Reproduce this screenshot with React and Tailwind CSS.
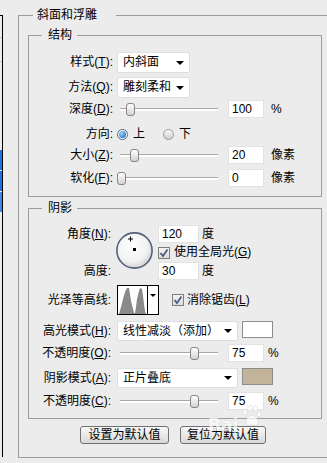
import React from "react";

function Key({ c }) {
    return <span className="underline underline-offset-[1px]">{c}</span>;
}

function Select({ value, w, h }) {
    return (
        <div className={`flex items-center justify-between bg-white border border-[#dedede] rounded-[2px] pl-[5px] pr-[5px] ${w} ${h}`}>
            <span>{value}</span>
            <span className="w-0 h-0 border-l-[4px] border-r-[4px] border-t-[4px] border-l-transparent border-r-transparent border-t-black" />
        </div>
    );
}

function Field({ value, w = "w-[36px]" }) {
    return (
        <div className={`h-[18px] bg-white border border-[#e2e2e2] pl-[3px] flex items-center leading-none ${w}`}>
            {value}
        </div>
    );
}

function Slider({ at }) {
    return (
        <div className="relative flex items-center w-[104px] h-[14px] px-[3px]">
            <div className="w-full h-[3px] border-t border-[#a9a9a9] bg-white" />
            <div
                className="absolute top-[1px] w-[9px] h-[13px] rounded-[3px] border border-[#858585] bg-gradient-to-b from-white to-[#d2d2d2]"
                style={{ left: at }}
            />
        </div>
    );
}

function Check({ className = "" }) {
    return (
        <div className={`w-[12px] h-[12px] border border-[#7d7d7d] bg-gradient-to-b from-[#f4f4f4] to-[#dcdcdc] flex items-center justify-center ${className}`}>
            <svg width="10" height="10" viewBox="0 0 10 10">
                <path d="M1.5 5 L4 8 L8.5 1.5" fill="none" stroke="#4b5b86" strokeWidth="1.8" />
            </svg>
        </div>
    );
}

function Radio({ on }) {
    return (
        <div className={`w-[11px] h-[11px] rounded-full border flex items-center justify-center ${on ? "border-[#4d6487] bg-white" : "border-[#9a9a9a] bg-gradient-to-b from-[#fafafa] to-[#cfcfcf]"}`}>
            {on && <div className="w-[7px] h-[7px] rounded-full bg-[radial-gradient(circle_at_35%_35%,#9ad6ff,#0b5aa6)]" />}
        </div>
    );
}

function Row({ label, lw = "w-[84px]", gap = "gap-[4px]", className = "", children }) {
    return (
        <div className={`flex items-center ${gap} ${className}`}>
            <div className={`text-right shrink-0 ${lw}`}>{label}</div>
            {children}
        </div>
    );
}

function Dial() {
    return (
        <svg width="37" height="37" viewBox="0 0 37 37">
            <defs>
                <radialGradient id="dg" cx="42%" cy="38%" r="70%">
                    <stop offset="0" stopColor="#ffffff" />
                    <stop offset="0.65" stopColor="#f1f1f1" />
                    <stop offset="1" stopColor="#c4c4c4" />
                </radialGradient>
            </defs>
            <circle cx="18.5" cy="18.5" r="17.6" fill="url(#dg)" stroke="#52607d" strokeWidth="1.6" />
            <path d="M14.5 4.5v5M12 7h5" stroke="#000" strokeWidth="1" />
            <rect x="17" y="16" width="3" height="3" fill="#000" />
        </svg>
    );
}

function Contour() {
    return (
        <div className="flex w-[42px] h-[30px] border border-black bg-white">
            <svg width="29" height="28" viewBox="0 0 29 28">
                <path
                    d="M1 28 L3 21 L5 13 L7 6 L9 2 L11 2 L12 8 L13 15 L15 23 L16 27 L17 27 L18 21 L19 13 L21 5 L22 2 L24 3 L25 10 L26 18 L27 25 L28 28 Z"
                    fill="#8a8a8a"
                />
            </svg>
            <div className="flex-1 border-l border-black flex items-start justify-center pt-[8px]">
                <span className="w-0 h-0 border-l-[3px] border-r-[3px] border-t-[3px] border-l-transparent border-r-transparent border-t-black" />
            </div>
        </div>
    );
}

// faint site watermark over the lower right corner
function Watermark() {
    return (
        <div className="absolute left-[208px] top-[404px] flex items-end gap-[1px] opacity-70 pointer-events-none">
            <span className="text-[17px] leading-none font-bold text-white font-['DejaVu_Sans',sans-serif] [text-shadow:0_0_1px_#c8c8c8]">Bai</span>
            <svg width="24" height="24" viewBox="0 0 24 24" className="mb-[6px]">
                <g fill="#ffffff" stroke="#cfcfcf" strokeWidth="0.6">
                    <ellipse cx="6" cy="8" rx="2.4" ry="3" />
                    <ellipse cx="11" cy="4.5" rx="2.4" ry="3" />
                    <ellipse cx="16.5" cy="5" rx="2.4" ry="3" />
                    <ellipse cx="20" cy="10" rx="2.2" ry="2.8" />
                    <path d="M7 19 C7 14 10 11 13 11 C16 11 19 14 19 19 C19 22 15 21 13 21 C11 21 7 22 7 19 Z" />
                </g>
            </svg>
        </div>
    );
}

export default function App() {
    return (
        <div className="relative w-[327px] h-[463px] overflow-hidden flex bg-[#ececec] text-[12px] leading-[15px] text-black font-['Liberation_Sans','Noto_Sans_CJK_SC',sans-serif]">
            {/* layer list edge on the left */}
            <div className="shrink-0 w-[3px] h-[442px] mt-[15px] border-t border-r border-black flex flex-col">
                <div className="h-[22px] border-b border-[#c8c8c8]" />
                <div className="h-[24px] border-b border-[#c8c8c8]" />
                <div className="h-[88px]" />
                <div className="h-[21px] bg-[#1a73e0] border-b border-white" />
                <div className="h-[21px] bg-[#1a73e0] border-b border-white" />
                <div className="h-[20px] bg-[#3d8ae6]" />
            </div>

            <fieldset className="shrink-0 ml-[15px] mt-[8px] w-[330px] h-[450px] border border-[#9c9c9c] pl-[9px] pb-[10px]">
                <legend className="ml-[5px] pl-[4px] pr-[19px] leading-[15px]">斜面和浮雕</legend>

                <fieldset className="mt-[5px] w-[294px] border border-[#9c9c9c] pb-[9px]">
                    <legend className="ml-[13px] pl-[6px] pr-[5px] leading-[15px]">结构</legend>
                    <div className="flex flex-col">
                        <Row label={<>样式(<Key c="T" />):</>} className="mt-[9px]">
                            <Select value="内斜面" w="w-[73px]" h="h-[21px]" />
                        </Row>
                        <Row label={<>方法(<Key c="Q" />):</>} className="mt-[4px]">
                            <Select value="雕刻柔和" w="w-[73px]" h="h-[21px]" />
                        </Row>
                        <Row label={<>深度(<Key c="D" />):</>} className="mt-[2px]">
                            <Slider at={9} />
                            <div className="ml-[3px]"><Field value="100" /></div>
                            <span className="ml-[3px]">%</span>
                        </Row>
                        <Row label="方向:" className="mt-[8px] h-[16px]">
                            <Radio on />
                            <span className="ml-[1px]">上</span>
                            <div className="ml-[14px]"><Radio /></div>
                            <span className="ml-[1px]">下</span>
                        </Row>
                        <Row label={<>大小(<Key c="Z" />):</>} className="mt-[4px]">
                            <Slider at={13} />
                            <div className="ml-[3px]"><Field value="20" /></div>
                            <span className="ml-[3px]">像素</span>
                        </Row>
                        <Row label={<>软化(<Key c="F" />):</>} className="mt-[5px]">
                            <Slider at={0} />
                            <div className="ml-[3px]"><Field value="0" /></div>
                            <span className="ml-[3px]">像素</span>
                        </Row>
                    </div>
                </fieldset>

                <fieldset className="mt-[4px] w-[294px] border border-[#9c9c9c] pb-[8px]">
                    <legend className="ml-[13px] pl-[6px] pr-[5px] leading-[15px]">阴影</legend>
                    <div className="flex flex-col">
                        <div className="flex mt-[9px]">
                            <div className="w-[82px] flex flex-col justify-between text-right pt-[2px] pb-[1px]">
                                <span>角度(<Key c="N" />):</span>
                                <span>高度:</span>
                            </div>
                            <div className="ml-[5px] self-center mt-[-4px]"><Dial /></div>
                            <div className="ml-[5px] flex flex-col">
                                <div className="flex items-center gap-[3px]">
                                    <Field value="120" w="w-[41px]" />
                                    <span>度</span>
                                </div>
                                <div className="flex items-center gap-[4px] mt-[4px] h-[11px]">
                                    <Check />
                                    <span>使用全局光(<Key c="G" />)</span>
                                </div>
                                <div className="flex items-center gap-[3px] mt-[4px]">
                                    <Field value="30" w="w-[41px]" />
                                    <span>度</span>
                                </div>
                            </div>
                        </div>
                        <Row label="光泽等高线:" lw="w-[82px]" gap="gap-[6px]" className="mt-[5px]">
                            <Contour />
                            <Check className="ml-[7px]" />
                            <span className="-ml-[3px]">消除锯齿(<Key c="L" />)</span>
                        </Row>
                        <Row label={<>高光模式(<Key c="H" />):</>} lw="w-[82px]" gap="gap-[6px]" className="mt-[6px]">
                            <Select value="线性减淡（添加）" w="w-[121px]" h="h-[20px]" />
                            <div className="-ml-[2px] self-start w-[31px] h-[17px] border border-[#8c8c8c] bg-white" />
                        </Row>
                        <Row label={<>不透明度(<Key c="O" />):</>} lw="w-[82px]" gap="gap-[6px]" className="mt-[3px]">
                            <Slider at={73} />
                            <div className="ml-[1px]"><Field value="75" /></div>
                            <span className="ml-[-2px]">%</span>
                        </Row>
                        <Row label={<>阴影模式(<Key c="A" />):</>} lw="w-[82px]" gap="gap-[6px]" className="mt-[6px]">
                            <Select value="正片叠底" w="w-[121px]" h="h-[20px]" />
                            <div className="-ml-[2px] self-start w-[31px] h-[17px] border border-[#8c8c8c] bg-[#c1b49a]" />
                        </Row>
                        <Row label={<>不透明度(<Key c="C" />):</>} lw="w-[82px]" gap="gap-[6px]" className="mt-[4px]">
                            <Slider at={73} />
                            <div className="ml-[1px]"><Field value="75" /></div>
                            <span className="ml-[-2px]">%</span>
                        </Row>
                    </div>
                </fieldset>

                <div className="flex gap-[11px] ml-[52px] mt-[7px]">
                    <button className="w-[89px] h-[18px] border border-[#707070] rounded-[3px] bg-gradient-to-b from-[#f8f8f8] to-[#d9d9d9] text-[12px] leading-none">
                        设置为默认值
                    </button>
                    <button className="w-[86px] h-[18px] border border-[#707070] rounded-[3px] bg-gradient-to-b from-[#f8f8f8] to-[#d9d9d9] text-[12px] leading-none">
                        复位为默认值
                    </button>
                </div>
            </fieldset>

            <Watermark />
        </div>
    );
}
